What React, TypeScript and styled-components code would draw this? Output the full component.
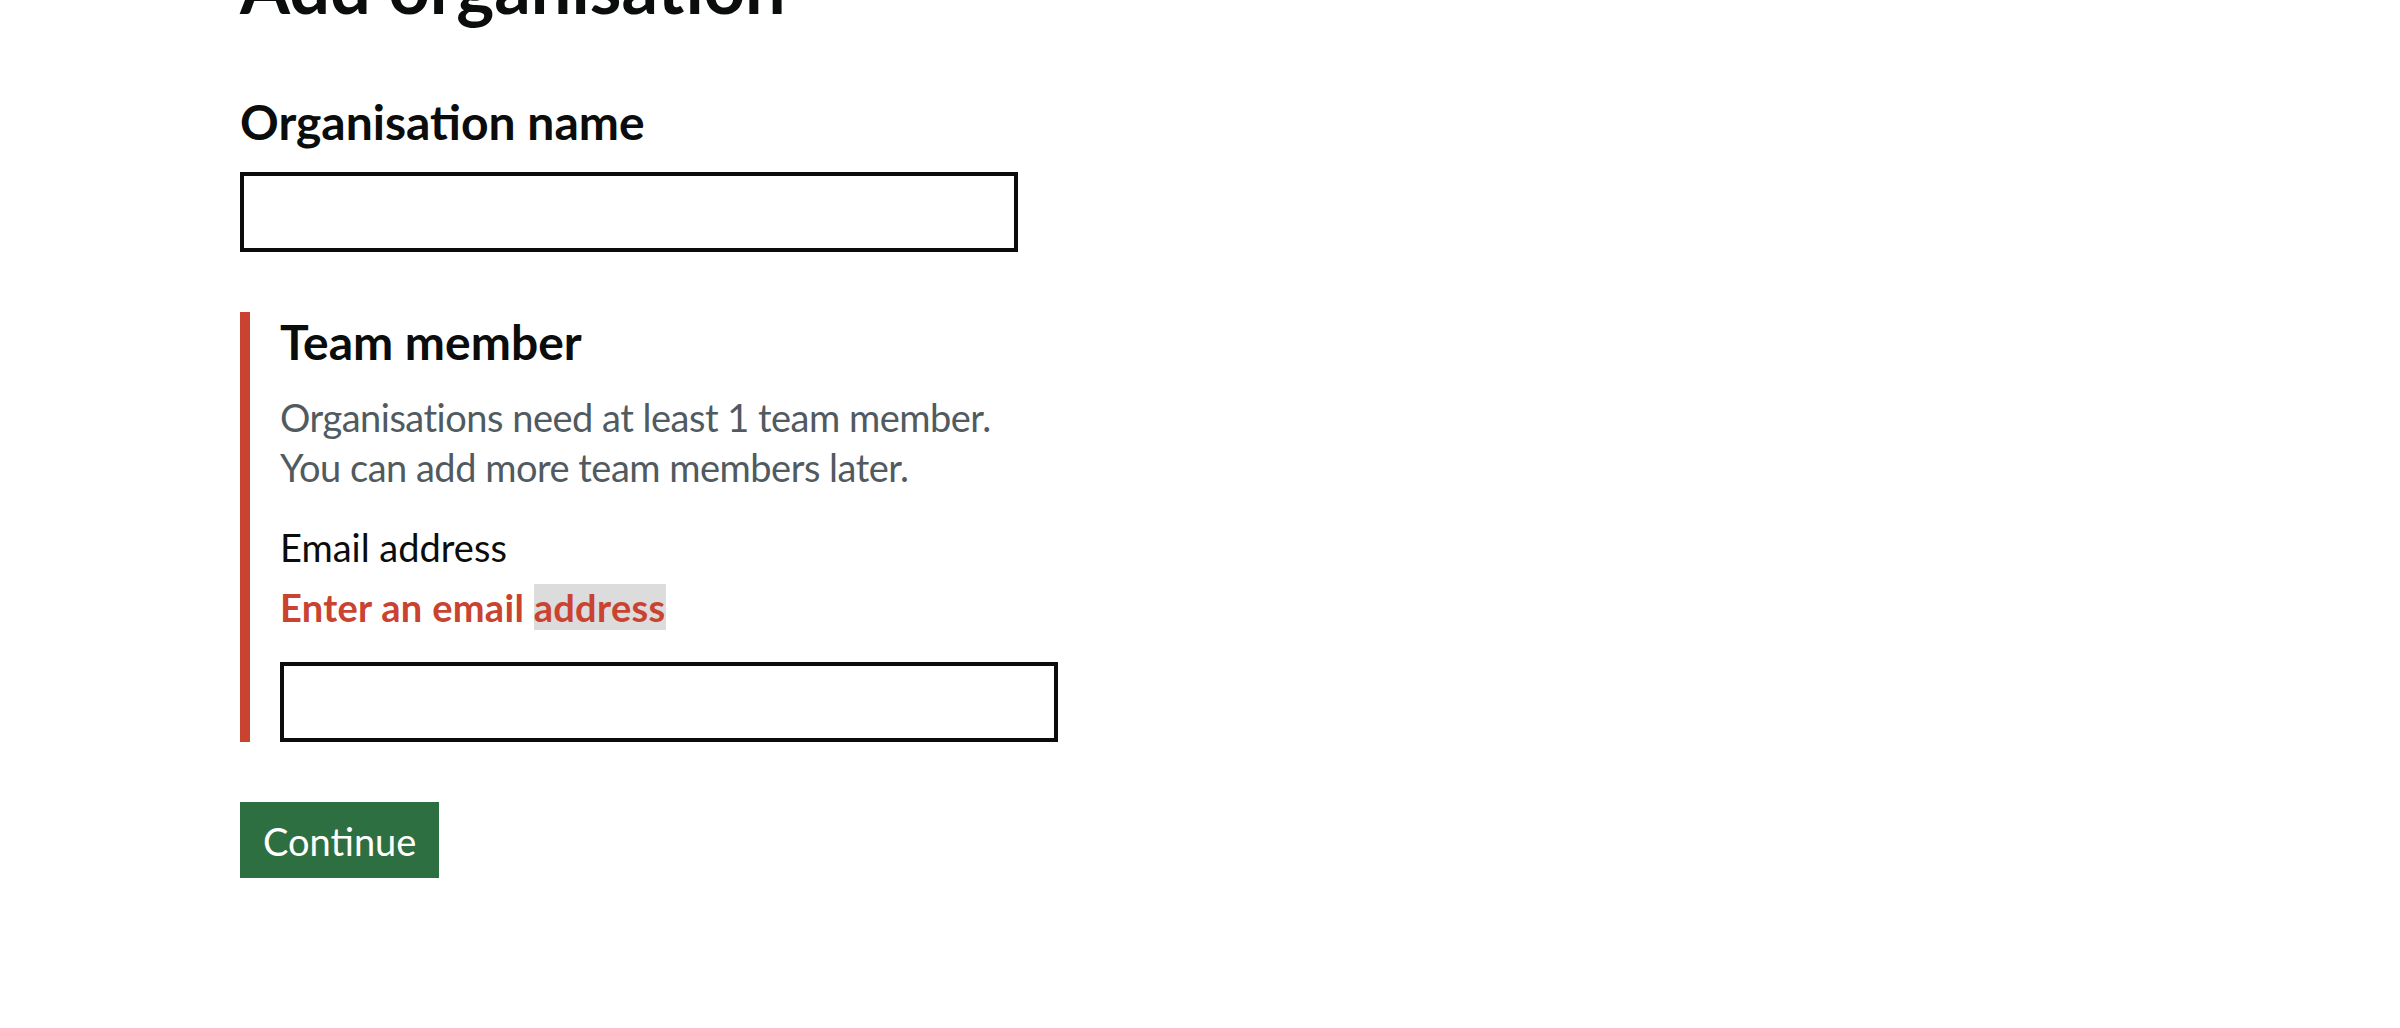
import React from "react";
import styled, { createGlobalStyle, css } from "styled-components";

const GlobalStyle = createGlobalStyle`
  html, body {
    margin: 0;
    padding: 0;
    background: #ffffff;
  }
  body {
    font-family: "Lato", "Liberation Sans", Arial, sans-serif;
    color: #0b0c0c;
    -webkit-font-smoothing: antialiased;
  }
  * { box-sizing: border-box; }
`;

const Page = styled.main`
  padding-left: 240px;
  margin-top: -54px;
`;

const Heading = styled.h1`
  margin: 0 0 66px;
  font-size: 72px;
  line-height: 80px;
  font-weight: 700;
  color: #0b0c0c;
`;

const FormGroup = styled.div<{ $error?: boolean }>`
  margin-bottom: 60px;
  ${(p) =>
    p.$error &&
    css`
      padding-left: 30px;
      border-left: 10px solid #ca4230;
    `}
`;

const Fieldset = styled.fieldset`
  margin: 0;
  padding: 0;
  border: 0;
  min-width: 0;
`;

const LabelM = styled.label`
  display: block;
  margin-bottom: 20px;
  font-size: 48px;
  line-height: 60px;
  font-weight: 700;
  color: #0b0c0c;
`;

const LegendM = styled.legend`
  display: block;
  padding: 0;
  margin-bottom: 20px;
  font-size: 48px;
  line-height: 60px;
  font-weight: 700;
  color: #0b0c0c;
`;

const Hint = styled.div`
  margin-bottom: 30px;
  font-size: 38px;
  line-height: 50px;
  letter-spacing: -0.5px;
  color: #505a5f;
`;

const Label = styled.label`
  display: block;
  margin-bottom: 10px;
  font-size: 38px;
  line-height: 50px;
  color: #0b0c0c;
`;

const ErrorMessage = styled.p`
  margin: 0 0 30px;
  font-size: 38px;
  line-height: 50px;
  font-weight: 700;
  letter-spacing: 0.3px;
  color: #ca4230;
`;

const Highlight = styled.span`
  background: #dcdcdc;
`;

const Input = styled.input`
  display: block;
  width: 778px;
  height: 80px;
  margin: 0;
  padding: 10px;
  border: 4px solid #0b0c0c;
  border-radius: 0;
  font-family: inherit;
  font-size: 38px;
  background: #ffffff;
  &:focus {
    outline: none;
  }
`;

const Button = styled.button`
  display: inline-block;
  margin: 0;
  padding: 16px 19px 14px;
  border: 4px solid transparent;
  border-radius: 0;
  background: #2e6f42;
  box-shadow: 0 4px 0 #0e2d18;
  color: #ffffff;
  font-family: inherit;
  font-size: 38px;
  line-height: 1;
  font-weight: 400;
  cursor: pointer;
`;

export default function App() {
  return (
    <>
      <GlobalStyle />
      <Page>
        <Heading>Add organisation</Heading>
        <FormGroup>
          <LabelM htmlFor="org-name">Organisation name</LabelM>
          <Input id="org-name" type="text" />
        </FormGroup>
        <FormGroup $error>
          <Fieldset>
            <LegendM>Team member</LegendM>
            <Hint>
              Organisations need at least 1 team member.
              <br />
              You can add more team members later.
            </Hint>
            <Label htmlFor="email">Email address</Label>
            <ErrorMessage>
              Enter an email <Highlight>address</Highlight>
            </ErrorMessage>
            <Input id="email" type="email" />
          </Fieldset>
        </FormGroup>
        <Button type="button">Continue</Button>
      </Page>
    </>
  );
}
